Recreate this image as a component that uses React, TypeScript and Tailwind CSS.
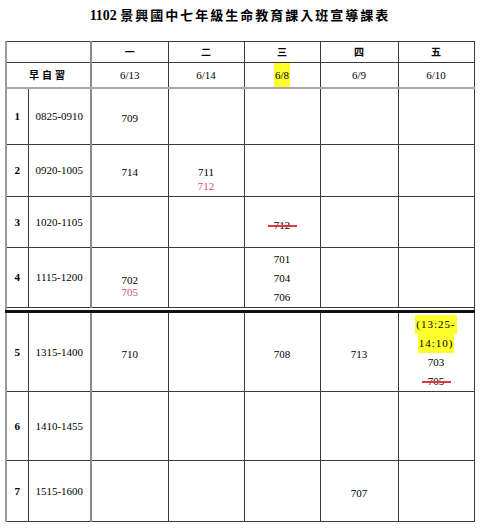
import React from "react";

const days = ["一", "二", "三", "四", "五"];
const dates = ["6/13", "6/14", "6/8", "6/9", "6/10"];

const cell = "border border-[#3a3a3a] p-0 text-center align-middle";
const leftCol = "border-r-2 border-r-[#8a8a8a]";

function Struck({ children }: { children: React.ReactNode }) {
  return (
    <span className="relative inline-block">
      {children}
      <span className="absolute left-[-6px] right-[-7px] top-[52%] h-[2px] bg-[#e2343f]" />
    </span>
  );
}

function Red({ children }: { children: React.ReactNode }) {
  return <div className="text-[#d8506a]">{children}</div>;
}

type Row = {
  no: string;
  time: string;
  h: string;
  cells: React.ReactNode[];
};

const rows: Row[] = [
  { no: "1", time: "0825-0910", h: "h-[56px]", cells: [<div className="pt-[4px]">709</div>, null, null, null, null] },
  {
    no: "2",
    time: "0920-1005",
    h: "h-[52px]",
    cells: [
      <div className="pt-[4px]">714</div>,
      <div className="pt-[18px] leading-[14px]">
        <div>711</div>
        <Red>712</Red>
      </div>,
      null,
      null,
      null,
    ],
  },
  { no: "3", time: "1020-1105", h: "h-[51px]", cells: [null, null, <div className="pt-[6px]"><Struck>712</Struck></div>, null, null] },
  {
    no: "4",
    time: "1115-1200",
    h: "h-[59px]",
    cells: [
      <div className="pt-[18px] leading-[12px]">
        <div>702</div>
        <Red>705</Red>
      </div>,
      null,
      <div className="leading-[19px] pt-[2px]">
        <div>701</div>
        <div>704</div>
        <div>706</div>
      </div>,
      null,
      null,
    ],
  },
];

const rowsPm: Row[] = [
  {
    no: "5",
    time: "1315-1400",
    h: "h-[80px]",
    cells: [
      <div className="pt-[4px]">710</div>,
      null,
      <div className="pt-[4px]">708</div>,
      <div className="pt-[4px]">713</div>,
      <div className="leading-[19px] pt-[2px]">
        <div>
          <span className="inline-block bg-[#ffff2e] px-[1px] tracking-[1px]">(13:25-</span>
        </div>
        <div>
          <span className="inline-block bg-[#ffff2e] px-[1px] tracking-[1px]">14:10)</span>
        </div>
        <div>703</div>
        <div>
          <Struck>705</Struck>
        </div>
      </div>,
    ],
  },
  { no: "6", time: "1410-1455", h: "h-[69px]", cells: [null, null, null, null, null] },
  { no: "7", time: "1515-1600", h: "h-[61px]", cells: [null, null, null, <div className="pt-[4px]">707</div>, null] },
];

function BodyRow({ r }: { r: Row }) {
  return (
    <tr className={r.h}>
      <td className={`${cell} border-l-2 border-l-[#9a9a9a] font-bold`}>{r.no}</td>
      <td className={`${cell} ${leftCol}`}>{r.time}</td>
      {r.cells.map((c, i) => (
        <td key={i} className={cell}>
          {c}
        </td>
      ))}
    </tr>
  );
}

export default function App() {
  return (
    <div className="w-[480px] h-[528px] bg-white text-black font-['Liberation_Serif','Noto_Sans_CJK_TC',serif] text-[11px] leading-[14px]">
      <div className="pt-[8px] h-[41px] text-center font-bold">
        <span className="text-[14px]">1102 </span>
        <span className="text-[13px] tracking-[2px] font-['Noto_Sans_CJK_TC',serif]">景興國中七年級生命教育課入班宣導課表</span>
      </div>
      <table className="ml-[5px] w-[468px] table-fixed border-collapse">
        <colgroup>
          <col className="w-[22px]" />
          <col className="w-[63px]" />
          <col className="w-[77px]" />
          <col className="w-[76px]" />
          <col className="w-[76px]" />
          <col className="w-[78px]" />
          <col className="w-[76px]" />
        </colgroup>
        <tbody>
          <tr className="h-[21px]">
            <td colSpan={2} className={`${cell} ${leftCol} border-l-2 border-l-[#9a9a9a]`} />
            {days.map((d) => (
              <td key={d} className={`${cell} font-bold text-[10px] font-['Noto_Sans_CJK_TC',serif]`}>
                {d}
              </td>
            ))}
          </tr>
          <tr className="h-[25px]">
            <td
              colSpan={2}
              className={`${cell} ${leftCol} border-l-2 border-l-[#9a9a9a] border-b-2 border-b-[#a8a8a8] font-bold text-[10px] tracking-[3px] font-['Noto_Sans_CJK_TC',serif]`}
            >
              早自習
            </td>
            {dates.map((d, i) => (
              <td key={d} className={`${cell} border-b-2 border-b-[#a8a8a8]`}>
                {i === 2 ? (
                  <span className="inline-block bg-[#ffff2e] px-[1px] leading-[24px] align-middle">{d}</span>
                ) : (
                  d
                )}
              </td>
            ))}
          </tr>
          {rows.map((r) => (
            <BodyRow key={r.no} r={r} />
          ))}
          <tr className="h-[4px]">
            <td colSpan={7} className="p-0 h-[4px] border-l-2 border-l-[#9a9a9a] border-r border-r-[#3a3a3a] border-b-[3px] border-b-[#111]" />
          </tr>
          {rowsPm.map((r) => (
            <BodyRow key={r.no} r={r} />
          ))}
        </tbody>
      </table>
    </div>
  );
}
